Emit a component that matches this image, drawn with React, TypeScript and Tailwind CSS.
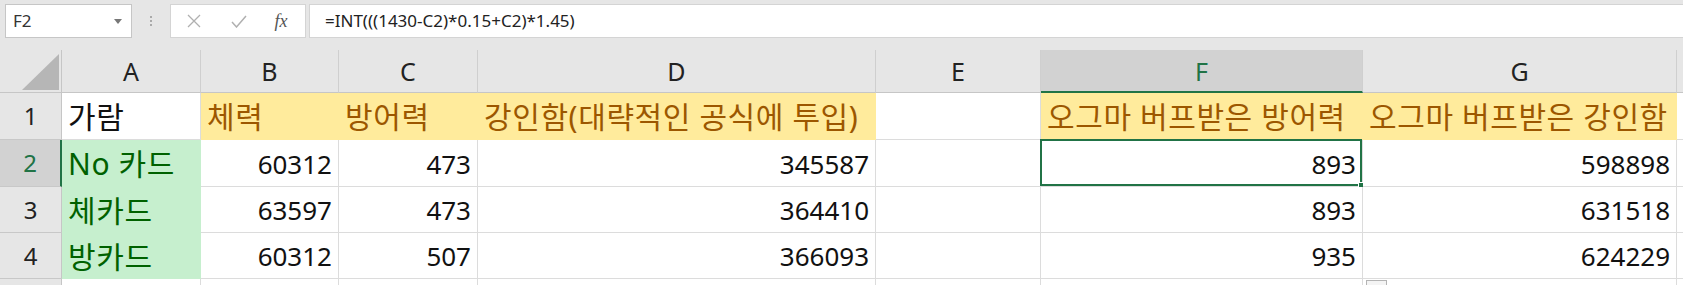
import React from "react";

const font = "font-['Noto_Sans','Noto_Sans_CJK_KR',sans-serif]";

type Cell = { text?: string; fill?: "yellow" | "green"; align?: "left" | "right"; selected?: boolean };

const widths = ["w-[139px]", "w-[138px]", "w-[139px]", "w-[398px]", "w-[165px]", "w-[322px]", "w-[314px]"];
const letters = ["A", "B", "C", "D", "E", "F", "G"];

const rows: { n: number; h: string; cells: Cell[] }[] = [
  {
    n: 1,
    h: "h-[47px]",
    cells: [
      { text: "가람" },
      { text: "체력", fill: "yellow" },
      { text: "방어력", fill: "yellow" },
      { text: "강인함(대략적인 공식에 투입)", fill: "yellow" },
      {},
      { text: "오그마 버프받은 방어력", fill: "yellow" },
      { text: "오그마 버프받은 강인함", fill: "yellow" },
    ],
  },
  {
    n: 2,
    h: "h-[47px]",
    cells: [
      { text: "No 카드", fill: "green" },
      { text: "60312", align: "right" },
      { text: "473", align: "right" },
      { text: "345587", align: "right" },
      {},
      { text: "893", align: "right", selected: true },
      { text: "598898", align: "right" },
    ],
  },
  {
    n: 3,
    h: "h-[46px]",
    cells: [
      { text: "체카드", fill: "green" },
      { text: "63597", align: "right" },
      { text: "473", align: "right" },
      { text: "364410", align: "right" },
      {},
      { text: "893", align: "right" },
      { text: "631518", align: "right" },
    ],
  },
  {
    n: 4,
    h: "h-[46px]",
    cells: [
      { text: "방카드", fill: "green" },
      { text: "60312", align: "right" },
      { text: "507", align: "right" },
      { text: "366093", align: "right" },
      {},
      { text: "935", align: "right" },
      { text: "624229", align: "right" },
    ],
  },
];

function DataCell({ cell, w }: { cell: Cell; w: string }) {
  const fillCls =
    cell.fill === "yellow"
      ? "bg-[#ffeb9c] text-[#9c5700] border-[#ffeb9c]"
      : cell.fill === "green"
      ? "bg-[#c6efce] text-[#006100] border-[#c6efce]"
      : "bg-white text-[#111] border-[#dcdcdc]";
  // 한글 셀은 글자가 더 크게 보여서 크기를 따로 줌
  const sizeCls = cell.align === "right" ? "text-[26px] pt-[2px]" : "text-[30px] pt-[1px] tracking-[0.6px]";
  return (
    <div
      className={`${w} relative shrink-0 flex items-center whitespace-nowrap border-r border-b px-[6px] ${sizeCls} ${fillCls} ${
        cell.align === "right" ? "justify-end" : "justify-start"
      }`}
    >
      {cell.text}
      {cell.selected && (
        <div className="absolute -left-[1px] -top-[1px] right-0 bottom-0 border-2 border-[#217346]">
          <div className="absolute -right-[4px] -bottom-[4px] w-[6px] h-[6px] bg-[#217346] border border-white" />
        </div>
      )}
    </div>
  );
}

export default function App() {
  return (
    <div className={`w-[1683px] h-[285px] overflow-hidden bg-[#e6e6e6] ${font}`}>
      {/* formula bar */}
      <div className="flex h-[50px] items-start pt-[4px] pl-[5px]">
        <div className="w-[127px] h-[34px] bg-white border border-[#c6c6c6] flex items-center justify-between pl-[7px] pr-[9px] text-[17px] text-[#333]">
          <span>F2</span>
          <svg width="8" height="5" viewBox="0 0 8 5">
            <path d="M0 0h8L4 5z" fill="#777" />
          </svg>
        </div>
        <div className="w-[38px] h-[34px] flex flex-col items-center justify-center gap-[2px]">
          <span className="w-[2px] h-[2px] bg-[#aaa]" />
          <span className="w-[2px] h-[2px] bg-[#aaa]" />
          <span className="w-[2px] h-[2px] bg-[#aaa]" />
        </div>
        <div className="w-[136px] h-[34px] bg-white border border-[#d4d4d4] flex items-center">
          <div className="w-[46px] flex justify-center">
            <svg width="14" height="14" viewBox="0 0 14 14">
              <path d="M1 1l12 12M13 1L1 13" stroke="#b0b0b0" strokeWidth="1.3" />
            </svg>
          </div>
          <div className="w-[44px] flex justify-center">
            <svg width="16" height="13" viewBox="0 0 16 13">
              <path d="M1 7l4.5 5L15 1" stroke="#b0b0b0" strokeWidth="1.5" fill="none" />
            </svg>
          </div>
          <div className="w-[40px] flex justify-center font-['Liberation_Serif',serif] italic text-[18px] text-[#555]">
            fx
          </div>
        </div>
        <div className="ml-[3px] flex-1 h-[34px] bg-white border-y border-l border-[#d4d4d4] flex items-center pl-[15px] text-[17px] text-[#222]">
          =INT(((1430-C2)*0.15+C2)*1.45)
        </div>
      </div>

      {/* column header */}
      <div className="flex h-[43px]">
        <div className="w-[62px] shrink-0 border-r border-b border-[#c6c6c6] flex items-end justify-end pr-[2px] pb-[2px]">
          <svg width="37" height="36" viewBox="0 0 37 36">
            <path d="M37 0V36H0z" fill="#b6b6b6" />
          </svg>
        </div>
        {letters.map((l, i) => (
          <div
            key={l}
            className={`${widths[i]} shrink-0 flex items-center justify-center text-[25px] pt-[2px] border-r border-[#cfcfcf] ${
              l === "F" ? "bg-[#d2d2d2] text-[#217346] border-b-2 border-b-[#217346]" : "text-[#222] border-b border-b-[#c6c6c6]"
            }`}
          >
            {l}
          </div>
        ))}
        <div className="flex-1 border-b border-[#c6c6c6]" />
      </div>

      {/* rows */}
      {rows.map((r) => (
        <div key={r.n} className={`flex ${r.h}`}>
          <div
            className={`w-[62px] shrink-0 flex items-center justify-center text-[24px] border-b border-[#c8c8c8] ${
              r.n === 2 ? "bg-[#d2d2d2] text-[#217346] border-r-2 border-r-[#217346]" : "text-[#222] border-r border-r-[#c6c6c6]"
            }`}
          >
            {r.n}
          </div>
          {r.cells.map((c, i) => (
            <DataCell key={i} cell={c} w={widths[i]} />
          ))}
          <div className="flex-1 bg-white border-b border-[#dcdcdc]" />
        </div>
      ))}

      {/* partial row 5 */}
      <div className="flex h-[8px]">
        <div className="w-[62px] shrink-0 border-r border-[#c6c6c6]" />
        {widths.map((w, i) => (
          <div key={i} className={`${w} shrink-0 bg-white border-r border-[#dcdcdc] relative`}>
            {i === 6 && (
              <div className="absolute left-[3px] top-[1px] w-[21px] h-[8px] border border-[#b4b4b4] bg-[#f4f4f4]" />
            )}
          </div>
        ))}
        <div className="flex-1 bg-white" />
      </div>
    </div>
  );
}
